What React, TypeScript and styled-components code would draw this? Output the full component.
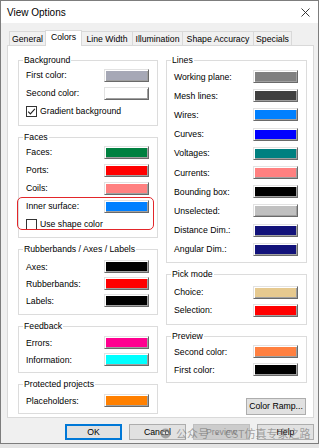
import React from "react";
import styled, { createGlobalStyle } from "styled-components";

const Global = createGlobalStyle`
  html, body { margin: 0; padding: 0; background: #e4e4e4; }
  body {
    font-family: "Liberation Sans", Arial, sans-serif;
    font-size: 8.7px;
    color: #000;
  }
  * { box-sizing: border-box; }
`;

const Window = styled.div`
  position: relative;
  width: 319px;
  height: 444px;
  border: 1px solid #7d7d7d;
  background: #f0f0f0;
  display: flex;
  flex-direction: column;
  overflow: hidden;
`;

const TitleBar = styled.div`
  height: 22px;
  background: #fff;
  display: flex;
  align-items: center;
  justify-content: space-between;
  padding: 1px 8px 0 6px;
  font-size: 10px;
`;

const CloseIcon = styled.svg`
  width: 9px;
  height: 9px;
  display: block;
`;

const Body = styled.div`
  flex: 1;
  display: flex;
  flex-direction: column;
  padding: 7px 4px 0 6px;
`;

const TabStrip = styled.div`
  position: relative;
  z-index: 1;
  display: flex;
  align-items: flex-end;
  height: 16px;
  margin-bottom: -1px;
  padding-left: 3px;
`;

const Tab = styled.div<{ $w: number; $active?: boolean }>`
  width: ${(p) => p.$w}px;
  height: ${(p) => (p.$active ? 16 : 14)}px;
  margin-bottom: ${(p) => (p.$active ? 0 : 1)}px;
  margin-left: -1px;
  position: relative;
  z-index: ${(p) => (p.$active ? 2 : 1)};
  border: 1px solid #d9d9d9;
  border-bottom: none;
  background: ${(p) => (p.$active ? "#ffffff" : "#f0f0f0")};
  display: flex;
  align-items: center;
  justify-content: center;
  padding-bottom: ${(p) => (p.$active ? 3 : 0)}px;
  white-space: nowrap;
`;

const Panel = styled.div`
  height: 373px;
  background: #fff;
  border: 1px solid #d9d9d9;
  padding: 9px 6px 0 10px;
  display: grid;
  grid-template-columns: 140px 141px;
  column-gap: 8px;
  align-items: start;
`;

const Column = styled.div`
  display: flex;
  flex-direction: column;
  gap: 6px;
`;

const Group = styled.fieldset<{ $pt: number; $pb: number }>`
  margin: 0;
  min-width: 0;
  border: 1px solid #dcdcdc;
  padding: ${(p) => p.$pt}px 8px ${(p) => p.$pb}px 7px;
`;

const Legend = styled.legend`
  padding: 0 1px;
  margin-left: -3px;
  line-height: 11px;
  font-size: 8.7px;
`;

const Row = styled.div<{ $h: number }>`
  height: ${(p) => p.$h}px;
  display: flex;
  align-items: center;
  justify-content: space-between;
  white-space: nowrap;
`;

const Swatch = styled.div`
  width: 45px;
  height: 13px;
  border: 1px solid;
  border-color: #e2e2e2 #6a6a6a #6a6a6a #e2e2e2;
  box-shadow: inset 1px 1px 0 #ffffff, inset -1px -1px 0 #a0a0a0;
  padding: 1px;
  background: #f0f0f0;
`;

const SwatchFill = styled.div<{ $c: string }>`
  width: 100%;
  height: 100%;
  background: ${(p) => p.$c};
`;

const CheckRow = styled.label<{ $h: number }>`
  height: ${(p) => p.$h}px;
  display: flex;
  align-items: center;
  gap: 3px;
  white-space: nowrap;
`;

const CheckBox = styled.span`
  width: 11px;
  height: 11px;
  border: 1px solid #333;
  background: #fff;
  display: flex;
  align-items: center;
  justify-content: center;
`;

const Highlight = styled.div`
  position: relative;
  &::after {
    content: "";
    position: absolute;
    top: 0;
    bottom: 3px;
    left: -9px;
    right: -5px;
    border: 1px solid #e3262a;
    border-radius: 5px;
    pointer-events: none;
  }
`;

const SmallButton = styled.button`
  align-self: flex-end;
  margin: 9px 1px 0 0;
  width: 60px;
  height: 17px;
  padding: 0;
  background: #e1e1e1;
  border: 1px solid #adadad;
  font-family: inherit;
  font-size: 8.7px;
  color: #000;
`;

const ButtonRow = styled.div`
  display: flex;
  justify-content: flex-end;
  gap: 7px;
  margin-top: 6px;
`;

const DlgButton = styled.button<{ $primary?: boolean }>`
  width: 57px;
  height: 16px;
  padding: 0;
  font-family: inherit;
  font-size: 8.7px;
  color: ${(p) => (p.disabled ? "#8a8a8a" : "#000")};
  background: ${(p) => (p.disabled ? "#cccccc" : "#e1e1e1")};
  border: 1px solid ${(p) => (p.$primary ? "#0078d7" : p.disabled ? "#bfbfbf" : "#adadad")};
  box-shadow: ${(p) => (p.$primary ? "inset 0 0 0 1px #0078d7" : "none")};
`;

const Watermark = styled.div`
  position: absolute;
  left: 159px;
  top: 424px;
  display: flex;
  align-items: center;
  gap: 5px;
  font-family: "Noto Sans CJK SC", "Liberation Sans", sans-serif;
  font-size: 11px;
  color: rgba(110, 110, 110, 0.6);
  pointer-events: none;
  white-space: nowrap;
`;

type Item = { label: string; color: string };

function ColorRow({ label, color, h }: Item & { h: number }) {
  return (
    <Row $h={h}>
      <span>{label}</span>
      <Swatch>
        <SwatchFill $c={color} />
      </Swatch>
    </Row>
  );
}

function Check({ label, checked, h }: { label: string; checked?: boolean; h: number }) {
  return (
    <CheckRow $h={h}>
      <CheckBox>
        {checked && (
          <svg width="9" height="9" viewBox="0 0 9 9">
            <path d="M1.2 4.6 L3.4 6.9 L7.9 1.8" fill="none" stroke="#222" strokeWidth="1.1" />
          </svg>
        )}
      </CheckBox>
      <span>{label}</span>
    </CheckRow>
  );
}

const tabs = [
  { label: "General", w: 37 },
  { label: "Colors", w: 37, active: true },
  { label: "Line Width", w: 52 },
  { label: "Illumination", w: 51 },
  { label: "Shape Accuracy", w: 72 },
  { label: "Specials", w: 39 },
];

const lines: Item[] = [
  { label: "Working plane:", color: "#808080" },
  { label: "Mesh lines:", color: "#404040" },
  { label: "Wires:", color: "#0080ff" },
  { label: "Curves:", color: "#0000ff" },
  { label: "Voltages:", color: "#008080" },
  { label: "Currents:", color: "#ff8080" },
  { label: "Bounding box:", color: "#000000" },
  { label: "Unselected:", color: "#c0c0c0" },
  { label: "Distance Dim.:", color: "#12127a" },
  { label: "Angular Dim.:", color: "#12127a" },
];

export default function App() {
  return (
    <>
      <Global />
      <Window>
        <TitleBar>
          <span>View Options</span>
          <CloseIcon viewBox="0 0 9 9">
            <path d="M0.5 0.5 L8.5 8.5 M8.5 0.5 L0.5 8.5" stroke="#222" strokeWidth="0.9" />
          </CloseIcon>
        </TitleBar>
        <Body>
          <TabStrip>
            {tabs.map((t) => (
              <Tab key={t.label} $w={t.w} $active={t.active}>
                {t.label}
              </Tab>
            ))}
          </TabStrip>
          <Panel>
            <Column>
              <Group $pt={0} $pb={5}>
                <Legend>Background</Legend>
                <ColorRow h={18} label="First color:" color="#a6a8b6" />
                <ColorRow h={18} label="Second color:" color="#ffffff" />
                <Check h={18} label="Gradient background" checked />
              </Group>
              <Group $pt={0} $pb={4}>
                <Legend>Faces</Legend>
                <ColorRow h={18} label="Faces:" color="#008040" />
                <ColorRow h={18} label="Ports:" color="#ff0000" />
                <ColorRow h={18} label="Coils:" color="#ff8080" />
                <Highlight>
                  <ColorRow h={18} label="Inner surface:" color="#0080ff" />
                  <Check h={18} label="Use shape color" />
                </Highlight>
              </Group>
              <Group $pt={3} $pb={5}>
                <Legend>Rubberbands / Axes / Labels</Legend>
                <ColorRow h={17} label="Axes:" color="#000000" />
                <ColorRow h={17} label="Rubberbands:" color="#ff0000" />
                <ColorRow h={17} label="Labels:" color="#000000" />
              </Group>
              <Group $pt={2} $pb={4}>
                <Legend>Feedback</Legend>
                <ColorRow h={17} label="Errors:" color="#ff0090" />
                <ColorRow h={17} label="Information:" color="#00ffff" />
              </Group>
              <Group $pt={2} $pb={4}>
                <Legend>Protected projects</Legend>
                <ColorRow h={17} label="Placeholders:" color="#ff8000" />
              </Group>
            </Column>
            <Column>
              <Group $pt={1} $pb={3}>
                <Legend>Lines</Legend>
                {lines.map((l) => (
                  <ColorRow key={l.label} h={19.2} label={l.label} color={l.color} />
                ))}
              </Group>
              <Group $pt={3.5} $pb={5}>
                <Legend>Pick mode</Legend>
                <ColorRow h={18} label="Choice:" color="#e6c98f" />
                <ColorRow h={18} label="Selection:" color="#ff0000" />
              </Group>
              <Group $pt={0.5} $pb={3}>
                <Legend>Preview</Legend>
                <ColorRow h={18} label="Second color:" color="#ff8040" />
                <ColorRow h={18} label="First color:" color="#000000" />
              </Group>
              <SmallButton>Color Ramp...</SmallButton>
            </Column>
          </Panel>
          <ButtonRow>
            <DlgButton $primary>OK</DlgButton>
            <DlgButton>Cancel</DlgButton>
            <DlgButton disabled>Preview</DlgButton>
            <DlgButton>Help</DlgButton>
          </ButtonRow>
        </Body>
        <Watermark>
          <svg width="11" height="11" viewBox="0 0 11 11">
            <circle cx="5.5" cy="5.5" r="5" fill="rgba(110,110,110,0.55)" />
            <circle cx="4" cy="5" r="1" fill="#fff" />
            <circle cx="7" cy="5" r="1" fill="#fff" />
          </svg>
          <span>公众号 · CST仿真专家之路</span>
        </Watermark>
      </Window>
    </>
  );
}
